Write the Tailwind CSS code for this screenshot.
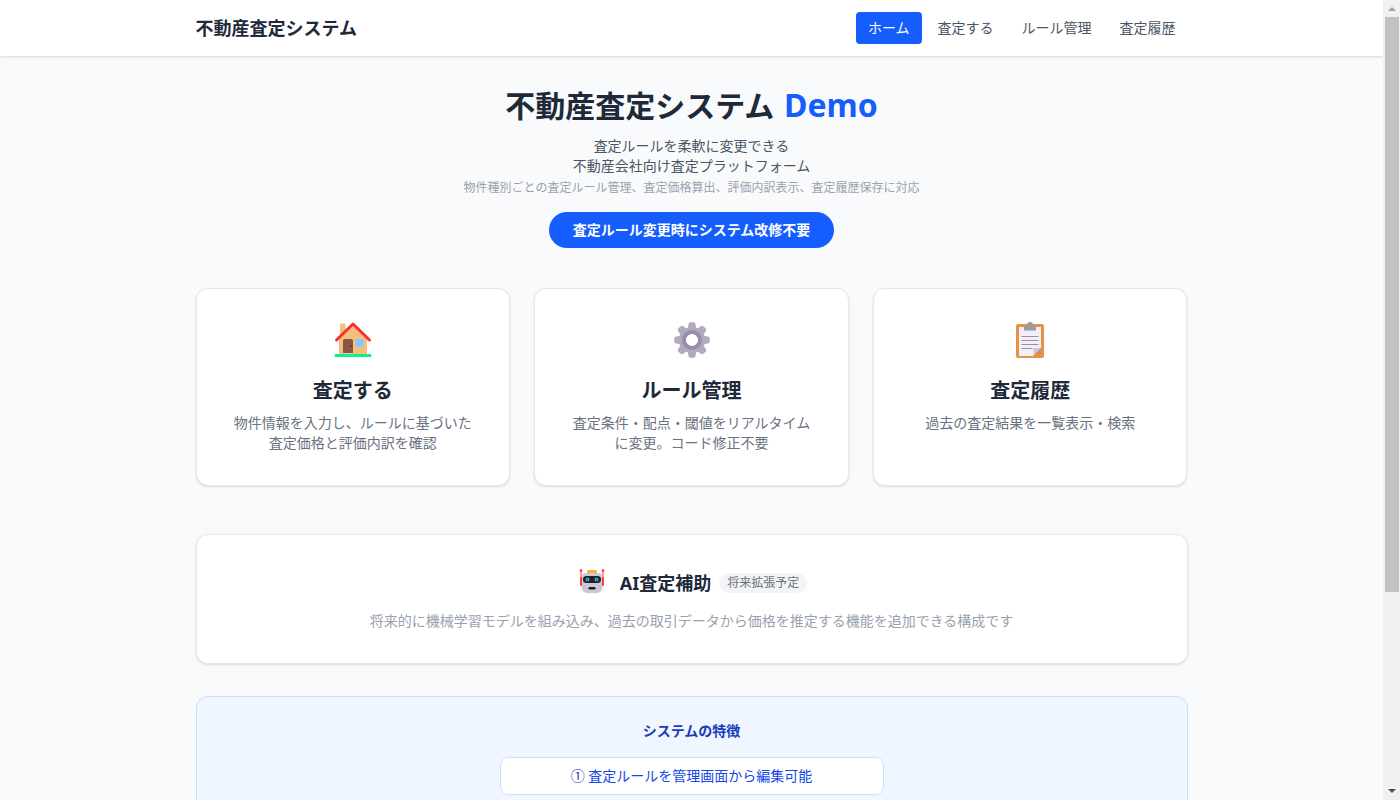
<!DOCTYPE html>
<html lang="ja">
<head>
    <meta charset="UTF-8">
    <meta name="viewport" content="width=device-width, initial-scale=1.0">
    <title>不動産査定システム</title>
    <script src="https://cdn.jsdelivr.net/npm/@tailwindcss/browser@4"></script>
</head>
<body class="flex h-screen overflow-hidden bg-[#f9fafc] text-gray-800 font-['Noto_Sans','Noto_Sans_CJK_JP',sans-serif]">
    <div id="page" class="flex-1 min-w-0 overflow-y-auto [scrollbar-width:none]">
        <!-- Header -->
        <header class="bg-white shadow-sm">
            <div class="max-w-5xl mx-auto px-4 h-14 flex items-center justify-between">
                <a href="#" class="text-lg font-bold">不動産査定システム</a>
                <nav class="flex gap-1 text-sm text-gray-600">
                    <a href="#" class="px-3 py-1.5 rounded bg-blue-600 text-white">ホーム</a>
                    <a href="#" class="px-3 py-1.5 rounded hover:bg-gray-100">査定する</a>
                    <a href="#" class="px-3 py-1.5 rounded hover:bg-gray-100">ルール管理</a>
                    <a href="#" class="px-3 py-1.5 rounded hover:bg-gray-100">査定履歴</a>
                </nav>
            </div>
        </header>

        <main class="max-w-5xl mx-auto px-4 py-8">
            <!-- Hero -->
            <section class="text-center mb-10">
                <h1 class="text-3xl font-bold mb-3">不動産査定システム <span class="ml-0.5 text-[32px] leading-8 text-blue-600">Demo</span></h1>
                <p class="text-sm text-gray-600">査定ルールを柔軟に変更できる<br>不動産会社向け査定プラットフォーム</p>
                <p class="text-xs text-gray-400 mt-1">物件種別ごとの査定ルール管理、査定価格算出、評価内訳表示、査定履歴保存に対応</p>
                <div class="flex justify-center mt-4">
                    <span class="bg-blue-600 text-white text-sm font-bold px-6 py-2 rounded-full">査定ルール変更時にシステム改修不要</span>
                </div>
            </section>

            <!-- Menu cards -->
            <section class="grid grid-cols-3 gap-6 text-center">
                <a href="#" class="bg-white rounded-xl border border-gray-200 shadow-sm p-8 hover:shadow-md">
                    <svg class="w-10 h-10 mx-auto mb-4" viewBox="0 1 40 40" aria-hidden="true">
                        <path d="M7 4.500a1 1 0 0 1 1-1h3.500a1 1 0 0 1 1 1V20H7z" fill="#f3bf7b"/>
                        <path d="M6 18 20 4l14 14v18H6z" fill="#f3bf7b"/>
                        <path d="M3.500 20 20 4l16.500 16" fill="none" stroke="#fb2f30" stroke-width="3" stroke-linecap="round" stroke-linejoin="round"/>
                        <path d="M10 20.500a1.500 1.500 0 0 1 1.500-1.500h7a1.500 1.500 0 0 1 1.500 1.500V34H10z" fill="#8b5543"/>
                        <path d="M10 33h10v1.300H10z" fill="#e0d2cc"/>
                        <circle cx="18" cy="26" r="1" fill="#6d3838"/>
                        <rect x="22.500" y="19" width="8" height="8" rx="1" fill="#83c9ff"/>
                        <path d="M3.500 34h33a1.500 1.500 0 0 1 1 3h-35a1.500 1.500 0 0 1 1-3z" fill="#12ee8b"/>
                    </svg>
                    <h2 class="text-xl font-bold mb-2">査定する</h2>
                    <p class="text-sm text-gray-500">物件情報を入力し、ルールに基づいた査定価格と評価内訳を確認</p>
                </a>
                <a href="#" class="bg-white rounded-xl border border-gray-200 shadow-sm p-8 hover:shadow-md">
                    <svg class="w-10 h-10 mx-auto mb-4" viewBox="-1 1 40 40" aria-hidden="true">
                        <g fill="#b3a9be">
                            <path id="tooth" d="M15.500 9 16.700 3.500a1.700 1.700 0 0 1 1.600-1.300h3.400a1.700 1.700 0 0 1 1.600 1.300L24.500 9z"/>
                            <use href="#tooth" transform="rotate(45 20 20)"/>
                            <use href="#tooth" transform="rotate(90 20 20)"/>
                            <use href="#tooth" transform="rotate(135 20 20)"/>
                            <use href="#tooth" transform="rotate(180 20 20)"/>
                            <use href="#tooth" transform="rotate(225 20 20)"/>
                            <use href="#tooth" transform="rotate(270 20 20)"/>
                            <use href="#tooth" transform="rotate(315 20 20)"/>
                        </g>
                        <circle cx="20" cy="20" r="10" fill="none" stroke="#b3a9be" stroke-width="6"/>
                        <circle cx="20" cy="20" r="8" fill="none" stroke="#998ca6" stroke-width="4"/>
                    </svg>
                    <h2 class="text-xl font-bold mb-2">ルール管理</h2>
                    <p class="text-sm text-gray-500">査定条件・配点・閾値をリアルタイムに変更。コード修正不要</p>
                </a>
                <a href="#" class="bg-white rounded-xl border border-gray-200 shadow-sm p-8 hover:shadow-md">
                    <svg class="w-10 h-10 mx-auto mb-4" viewBox="0 1 40 40" aria-hidden="true">
                        <rect x="6" y="4" width="28" height="34" rx="2" fill="#e29545"/>
                        <path d="M9 7h22v21l-8 8H9z" fill="#f3eef8"/>
                        <path d="M23.500 28H31l-7.500 7.500z" fill="#cfc4db"/>
                        <path d="M23.500 36 31 28v8z" fill="#dc9147"/>
                        <path d="M14 6.500A1.500 1.500 0 0 1 15.500 5H17a3 3 0 0 1 6 0h1.500A1.500 1.500 0 0 1 26 6.500V10.500H14z" fill="#9b9b9b"/>
                        <circle cx="20" cy="5" r="1" fill="#e29545"/>
                        <path d="M11.500 16.500h17M11.500 20.500h17M11.500 24.500h17M11.500 28.500h11" stroke="#998ea4" stroke-width="1"/>
                    </svg>
                    <h2 class="text-xl font-bold mb-2">査定履歴</h2>
                    <p class="text-sm text-gray-500">過去の査定結果を一覧表示・検索</p>
                </a>
            </section>

            <!-- AI -->
            <section class="bg-white rounded-xl border border-gray-200 shadow-sm p-8 mt-12 text-center">
                <div class="flex items-center justify-center gap-2 mb-3">
                    <svg class="w-9 h-8" viewBox="0 1 36 32" aria-hidden="true">
                        <path d="M5 5v12M27 5v12" stroke="#f8312f" stroke-width="1"/>
                        <circle cx="5" cy="4.500" r="1.200" fill="#f8312f"/>
                        <circle cx="27" cy="4.500" r="1.200" fill="#f8312f"/>
                        <rect x="4" y="11" width="3" height="9" rx="1" fill="#f8414a"/>
                        <rect x="25" y="11" width="3" height="9" rx="1" fill="#f8414a"/>
                        <rect x="11" y="4" width="10" height="4" rx="1.500" fill="#ffb02e"/>
                        <path d="M10 7h12a4 4 0 0 1 4 4v11a5 5 0 0 1-5 5H11a5 5 0 0 1-5-5V11a4 4 0 0 1 4-4z" fill="#cdc4d6"/>
                        <rect x="7" y="10" width="18" height="7" rx="3.500" fill="#212121"/>
                        <circle cx="11.500" cy="13.500" r="2" fill="#26a9ec"/>
                        <circle cx="20.500" cy="13.500" r="2" fill="#26a9ec"/>
                        <path d="M11.500 12v3M20.500 12v3" stroke="#0084ce" stroke-width="1"/>
                        <rect x="12.500" y="21" width="7" height="2.500" rx="1.200" fill="#212121"/>
                    </svg>
                    <h2 class="text-lg font-bold">AI査定補助</h2>
                    <span class="text-xs text-gray-500 bg-gray-100 px-2 py-0.5 rounded-full">将来拡張予定</span>
                </div>
                <p class="text-sm text-gray-400">将来的に機械学習モデルを組み込み、過去の取引データから価格を推定する機能を追加できる構成です</p>
            </section>

            <!-- Features -->
            <section class="bg-blue-50 rounded-xl border border-[#c6e0ff] p-6 pb-60 mt-8 text-center text-sm">
                <h3 class="font-bold text-blue-800 mb-4">システムの特徴</h3>
                <ul class="max-w-sm mx-auto">
                    <li class="bg-white border border-[#c6e0ff] rounded-lg px-4 py-2 text-blue-700"><span class="text-blue-800">①</span> 査定ルールを管理画面から編集可能</li>
                </ul>
            </section>
        </main>
    </div>

    <!-- Scrollbar -->
    <div class="w-[17px] shrink-0 bg-[#f0f0f0] flex flex-col items-center" aria-hidden="true">
        <svg class="w-4 h-4 shrink-0" viewBox="0 0 16 16"><path d="M4 11h8L8 7z" fill="#a3a3a3"/></svg>
        <div class="flex-1 w-full pt-px pl-0.5 pr-px">
            <div class="h-3/4 bg-[#c1c1c1]"></div>
        </div>
        <svg class="w-4 h-4 shrink-0" viewBox="0 0 16 16"><path d="M4 5h8L8 9z" fill="#505050"/></svg>
    </div>
</body>
</html>
